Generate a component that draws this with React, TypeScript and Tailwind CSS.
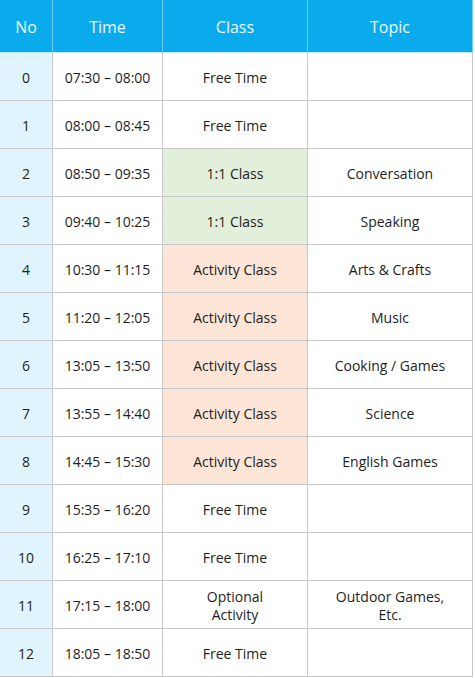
const rows = [
  { no: "0", time: "07:30 – 08:00", cls: "Free Time", topic: "", kind: "free" },
  { no: "1", time: "08:00 – 08:45", cls: "Free Time", topic: "", kind: "free" },
  { no: "2", time: "08:50 – 09:35", cls: "1:1 Class", topic: "Conversation", kind: "one" },
  { no: "3", time: "09:40 – 10:25", cls: "1:1 Class", topic: "Speaking", kind: "one" },
  { no: "4", time: "10:30 – 11:15", cls: "Activity Class", topic: "Arts & Crafts", kind: "act" },
  { no: "5", time: "11:20 – 12:05", cls: "Activity Class", topic: "Music", kind: "act" },
  { no: "6", time: "13:05 – 13:50", cls: "Activity Class", topic: "Cooking / Games", kind: "act" },
  { no: "7", time: "13:55 – 14:40", cls: "Activity Class", topic: "Science", kind: "act" },
  { no: "8", time: "14:45 – 15:30", cls: "Activity Class", topic: "English Games", kind: "act" },
  { no: "9", time: "15:35 – 16:20", cls: "Free Time", topic: "", kind: "free" },
  { no: "10", time: "16:25 – 17:10", cls: "Free Time", topic: "", kind: "free" },
  { no: "11", time: "17:15 – 18:00", cls: "Optional\nActivity", topic: "Outdoor Games,\nEtc.", kind: "free" },
  { no: "12", time: "18:05 – 18:50", cls: "Free Time", topic: "", kind: "free" },
]

const classBg: Record<string, string> = {
  free: "bg-white",
  one: "bg-[#e2efda]",
  act: "bg-[#fce4d6]",
}

const cell = "flex items-center justify-center text-center border-r border-b border-[#c8c8c8] h-[48px] pt-[2px] whitespace-pre-line leading-[18px]"

export default function App() {
  return (
    <div className="w-[475px] h-[678px] bg-white font-['Open_Sans',sans-serif] text-[14px] text-[#1e1e1e]">
      <div className="grid grid-cols-[53px_110px_145px_165px] w-[473px]">
        {["No", "Time", "Class", "Topic"].map((h) => (
          <div
            key={h}
            className="flex items-center justify-center h-[53px] pt-[2px] bg-[#0aabec] text-[#eaf8ff] text-[16px] border-r border-b border-r-[#6cccf3] border-b-[#bfe8f9]"
          >
            {h}
          </div>
        ))}
        {rows.map((r) => (
          <div key={r.no} className="contents">
            <div className={`${cell} bg-[#dff4fd]`}>{r.no}</div>
            <div className={`${cell} bg-white`}>{r.time}</div>
            <div className={`${cell} ${classBg[r.kind]}`}>{r.cls}</div>
            <div className={`${cell} bg-white`}>{r.topic}</div>
          </div>
        ))}
      </div>
    </div>
  )
}
